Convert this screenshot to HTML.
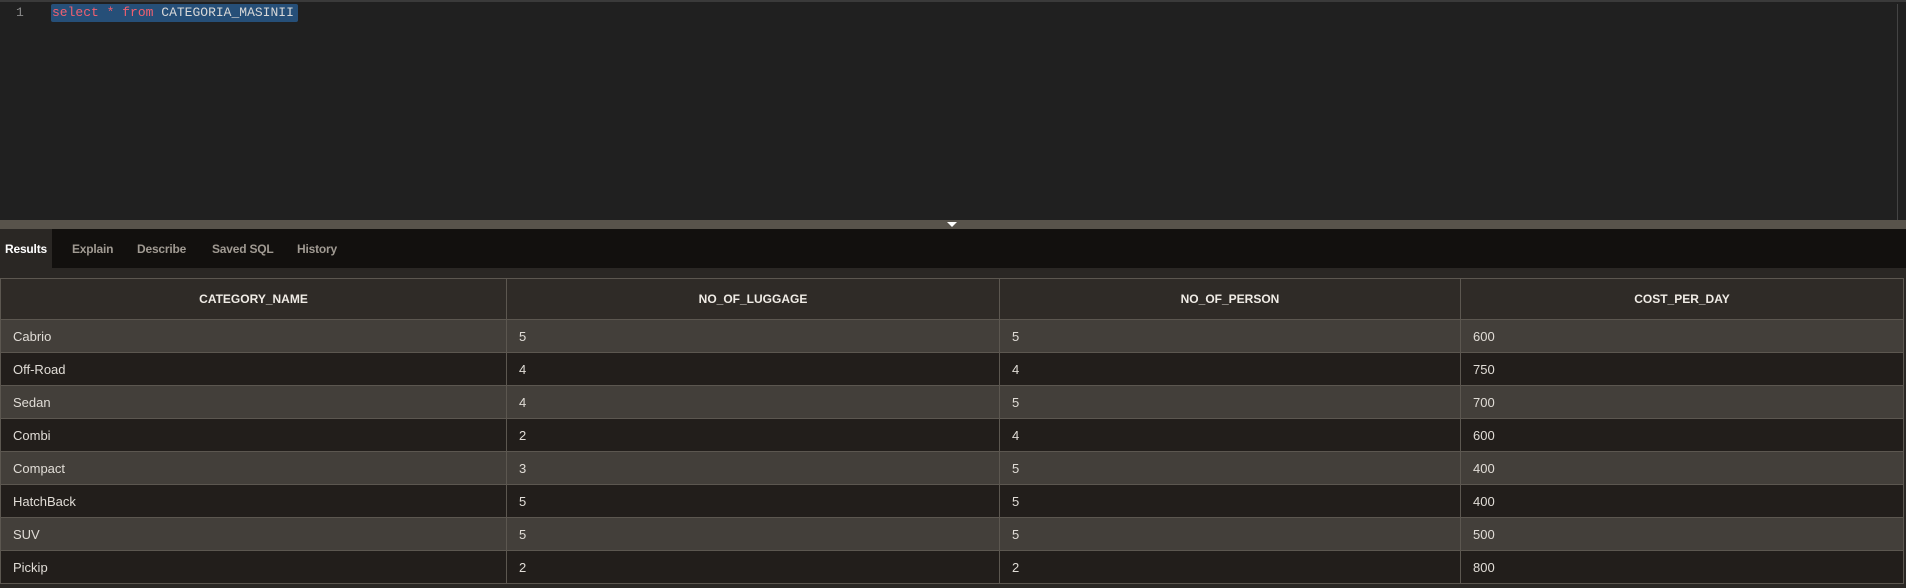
<!DOCTYPE html>
<html><head><style>
body{margin:0;width:1906px;height:588px;background:#2a2724;overflow:hidden;position:relative;font-family:"Liberation Sans",sans-serif}
#ed{position:absolute;left:0;top:0;width:1906px;height:220px;background:#202020;border-top:2px solid #3a3a3a;box-sizing:border-box}
#vl{position:absolute;left:1897px;top:2px;width:1px;height:218px;background:#444}
#ln{position:absolute;left:16px;top:3px;color:#8a8a8a;font:13px "Liberation Mono",monospace}
#sel{position:absolute;left:51px;top:2px;width:247px;height:18px;background:#264f78;border-radius:2px}
#code{position:absolute;left:52px;top:3px;font:13px "Liberation Mono",monospace;color:#d8d8d8;white-space:pre}
.k{color:#f06070}
#sp{position:absolute;left:0;top:220px;width:1906px;height:9px;background:#58534b}
#arr{position:absolute;left:947px;top:222px;width:0;height:0;border-left:5px solid transparent;border-right:5px solid transparent;border-top:5px solid #fff}
#tabs{position:absolute;left:0;top:229px;width:1906px;height:39px;background:#12100e}
.t{position:absolute;top:0;height:39px;line-height:41px;font-size:12px;font-weight:bold;color:#a09a92;letter-spacing:-0.2px}
table{position:absolute;left:0;top:278px;border-collapse:collapse;width:1903px;table-layout:fixed}
td,th{border:1px solid #5c5750;font-size:13px;color:#e0dcd6;padding:0 12px;height:32px}
th{height:40px;background:#2f2b27;font-weight:bold;color:#f0ece6;font-size:12px}
tr.o td{background:#433f3a}tr.e td{background:#221e1b}
</style></head><body>
<div id="ed"><div id="vl"></div><div id="ln">1</div><div id="sel"></div><div id="code"><span class="k">select</span> <span class="k">*</span> <span class="k">from</span> CATEGORIA_MASINII</div></div>
<div id="sp"></div><div id="arr"></div>
<div id="tabs">
<div class="t" style="left:0;width:52px;background:#2a2724;color:#fff;text-align:center">Results</div>
<div class="t" style="left:72px">Explain</div>
<div class="t" style="left:137px">Describe</div>
<div class="t" style="left:212px">Saved SQL</div>
<div class="t" style="left:297px">History</div>
</div>
<table>
<colgroup><col style="width:506px"><col style="width:493px"><col style="width:461px"><col style="width:443px"></colgroup>
<tr><th>CATEGORY_NAME</th><th>NO_OF_LUGGAGE</th><th>NO_OF_PERSON</th><th>COST_PER_DAY</th></tr>
<tr class="o"><td>Cabrio</td><td>5</td><td>5</td><td>600</td></tr>
<tr class="e"><td>Off-Road</td><td>4</td><td>4</td><td>750</td></tr>
<tr class="o"><td>Sedan</td><td>4</td><td>5</td><td>700</td></tr>
<tr class="e"><td>Combi</td><td>2</td><td>4</td><td>600</td></tr>
<tr class="o"><td>Compact</td><td>3</td><td>5</td><td>400</td></tr>
<tr class="e"><td>HatchBack</td><td>5</td><td>5</td><td>400</td></tr>
<tr class="o"><td>SUV</td><td>5</td><td>5</td><td>500</td></tr>
<tr class="e"><td>Pickip</td><td>2</td><td>2</td><td>800</td></tr>
</table>
</body></html>
